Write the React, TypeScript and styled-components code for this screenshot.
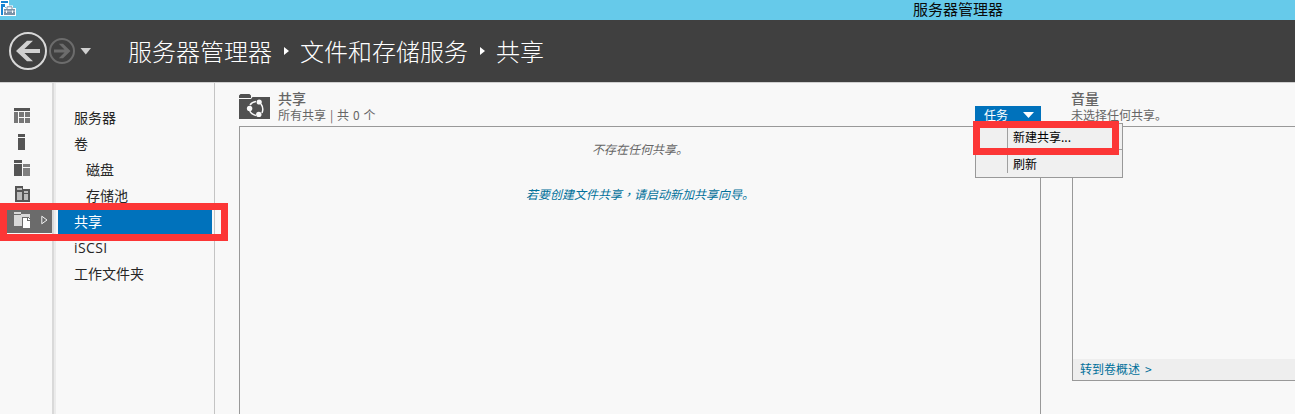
import React from "react";
import styled, { createGlobalStyle, css } from "styled-components";

const GlobalStyle = createGlobalStyle`
  *, *::before, *::after { box-sizing: border-box; }
  html, body { margin: 0; padding: 0; overflow: hidden; }
  body {
    background: #f8f8f8;
    color: #262626;
    font-family: "Noto Sans CJK SC", "Open Sans", sans-serif;
    font-size: 12px;
  }
`;

const Window = styled.div`
  position: relative;
  display: flex;
  flex-direction: column;
  width: 100%;
  height: 414px;
  overflow: hidden;
  white-space: nowrap;
`;

const TitleBar = styled.header`
  display: flex;
  flex: none;
  height: 20px;
  background: #66caea;
`;

const TitleText = styled.span`
  margin-left: 896px;
  font-size: 15px;
  line-height: 17px;
  color: #0a0a0a;
`;

const Banner = styled.div`
  display: flex;
  flex: none;
  align-items: center;
  height: 63px;
  background: #404040;
  border-bottom: 1px solid #d0d0d0;
`;

const HistoryButtons = styled.svg`
  flex: none;
  width: 128px;
  height: 62px;
`;

const Crumbs = styled.nav`
  display: flex;
  align-items: center;
  font-size: 24px;
  font-weight: 300;
  line-height: 62px;
  color: #fff;
`;

const Crumb = styled.span`
  padding-bottom: 1px;
`;

const CrumbArrow = styled.svg`
  width: 5px;
  height: 8px;
  margin: 0 11px 0 12px;
  fill: #fff;
`;

const Body = styled.div`
  display: flex;
  flex: 1;
  min-height: 0;
`;

const Rail = styled.div`
  display: flex;
  flex: none;
  flex-direction: column;
  width: 56px;
  padding-top: 20px;
  border-right: 2px solid #ebebeb;
  box-shadow: inset -2px 0 #d9d9d9;
`;

const RailItem = styled.div<{ $active?: boolean }>`
  display: flex;
  align-items: center;
  width: 45px;
  height: 26px;
  margin-left: 7px;
  padding-left: 7px;
  ${(p) => p.$active && css`
    background: #6b6b6b;
  `}
`;

const RailIcon = styled.svg`
  width: 16px;
  height: 16px;
  shape-rendering: crispEdges;
`;

const RailArrow = styled.svg`
  width: 7px;
  height: 10px;
  margin-left: 11px;
  fill: none;
  stroke: #f2f2f2;
`;

const Nav = styled.nav`
  flex: none;
  width: 159px;
  padding: 22px 2px 0;
  border-right: 1px solid #c4c4c4;
`;

const NavItem = styled.div<{ $active?: boolean; $nested?: boolean }>`
  height: 26px;
  padding-left: ${(p) => (p.$nested ? 28 : 16)}px;
  font-size: 14px;
  line-height: 25px;
  ${(p) => p.$active && css`
    color: #fff;
    background: #0072bc;
  `}
`;

const Latin = styled.span`
  font-family: "Open Sans", sans-serif;
  letter-spacing: 0.4px;
`;

const Shares = styled.section`
  display: flex;
  flex: none;
  flex-direction: column;
  width: 802px;
  margin-left: 24px;
`;

const SectionHead = styled.div`
  display: flex;
  flex: none;
  height: 43px;
`;

const FolderIcon = styled.svg`
  width: 31px;
  height: 26px;
  margin: 11px 8px 0 0;
`;

const HeadText = styled.div`
  flex: 1;
  padding-top: 7px;
  color: #666;
`;

const Heading = styled.h2`
  margin: 0;
  font-size: 14px;
  font-weight: 500;
  line-height: 17px;
`;

const Subheading = styled.p`
  margin: 0;
  font-size: 12px;
  line-height: 15px;
  word-spacing: 1.2px;
`;

const TaskArea = styled.div`
  position: relative;
  align-self: flex-end;
`;

const TaskButton = styled.div`
  display: flex;
  align-items: center;
  justify-content: space-between;
  width: 66px;
  height: 20px;
  padding: 0 7px 3px 9px;
  color: #fff;
  background: #0072bc;
`;

const Caret = styled.svg`
  width: 11px;
  height: 6px;
  fill: #fff;
`;

const Menu = styled.div`
  position: absolute;
  z-index: 2;
  top: 17px;
  left: 0;
  width: 148px;
  height: 55px;
  padding-top: 4px;
  color: #000;
  background: #f0f0f0;
  border: 1px solid #999;
`;

const MenuItem = styled.div`
  height: 22px;
  margin-left: 31px;
  padding-left: 5px;
  line-height: 18px;
  border-left: 1px solid #a0a0a0;
  & + & {
    height: 23px;
    padding-top: 5px;
    box-shadow: 0 -1px #a0a0a0;
  }
`;

const SharesPanel = styled.div`
  display: flex;
  flex: 1;
  flex-direction: column;
  align-items: center;
  border: 1px solid #999;
  border-bottom: 0;
  font-style: italic;
`;

const EmptyText = styled.p`
  margin: 12px 0 0;
  line-height: 20px;
  color: #666;
`;

const WizardLink = styled.a`
  margin-top: 25px;
  line-height: 20px;
  color: #00709a;
`;

const Comma = styled.span`
  font-family: "Noto Sans CJK TC", sans-serif;
`;

const Volume = styled.section`
  flex: 1;
  margin-left: 31px;
`;

const VolumeHead = styled(HeadText)`
  height: 43px;
  margin-left: -1px;
`;

const VolumePanel = styled.div`
  display: flex;
  flex-direction: column;
  justify-content: flex-end;
  height: 255px;
  border: 1px solid #999;
  border-right: 0;
`;

const VolumeFooter = styled.div`
  height: 21px;
  padding-left: 7px;
  line-height: 20px;
  color: #00709a;
  background: #eee;
`;

const More = styled.span`
  padding-left: 5px;
`;

const Highlight = styled.div<{ $menu?: boolean }>`
  position: absolute;
  z-index: 3;
  top: ${(p) => (p.$menu ? 121 : 203)}px;
  left: ${(p) => (p.$menu ? 973 : 0)}px;
  width: ${(p) => (p.$menu ? 146 : 228)}px;
  height: ${(p) => (p.$menu ? 34 : 38)}px;
  border: 7px solid #fc3636;
`;

const AppLogo = () => (
  <svg width="17" height="17" viewBox="0 0 17 17">
    <path d="M0 0h9v7H5v9H0z" fill="#fff" />
    <path d="M1 1h7v2H1zM1 4h4v3H3v8H1z" fill="#1684d2" />
    <path d="M3 8h3V5.5h7V8h3v8H3z" fill="#fff" />
    <path d="M4 9h11v6H4z" fill="#7b92a8" />
    <path d="M7 9V6.8h5V9" fill="none" stroke="#7b92a8" />
    <path d="M4 11.2h11" stroke="#dfe6ec" strokeWidth="0.7" />
    <path d="M6.5 10.5V13m6-2.5V13" stroke="#fff" />
  </svg>
);

export default function App() {
  return (
    <Window>
      <GlobalStyle />
      <TitleBar>
        <AppLogo />
        <TitleText>服务器管理器</TitleText>
      </TitleBar>

      <Banner>
        <HistoryButtons viewBox="0 0 128 62">
          <circle cx="28" cy="31" r="18" fill="none" stroke="#d8d8d8" strokeWidth="2" />
          <path d="M16 31 27 20.7h6L24.4 29H40v4H24.4l8.6 8.3h-6z" fill="#d0d0d0" />
          <circle cx="62" cy="31" r="12" fill="none" stroke="#6c6c6c" strokeWidth="2" />
          <path d="M70.5 31 63 23.8h-4.2l5.7 5.6H54v3.2h10.5l-5.7 5.6H63z" fill="#6c6c6c" />
          <path d="M80.5 28h10.5l-5.2 6.5z" fill="#d0d0d0" />
        </HistoryButtons>
        <Crumbs>
          <Crumb>服务器管理器</Crumb>
          <CrumbArrow viewBox="0 0 5 8"><path d="M0 0l5 4-5 4z" /></CrumbArrow>
          <Crumb>文件和存储服务</Crumb>
          <CrumbArrow viewBox="0 0 5 8"><path d="M0 0l5 4-5 4z" /></CrumbArrow>
          <Crumb>共享</Crumb>
        </Crumbs>
      </Banner>

      <Body>
        <Rail>
          <RailItem>
            <RailIcon viewBox="0 0 16 16">
              <path d="M0 0h16v3H0z" fill="#555" />
              <path d="M0 4h4v11H0zM5 4h5v5H5zM11 4h5v5h-5zM5 10h5v5H5zM11 10h5v5h-5z" fill="#777" />
            </RailIcon>
          </RailItem>
          <RailItem>
            <RailIcon viewBox="0 0 16 16">
              <path d="M4 0h7v3H4zM4 4h7v12H4z" fill="#555" />
            </RailIcon>
          </RailItem>
          <RailItem>
            <RailIcon viewBox="0 0 16 16">
              <path d="M0 0h8v3H0zM0 4h8v12H0z" fill="#555" />
              <path d="M9 4h7v3H9zM9 8h7v8H9z" fill="#808080" />
            </RailIcon>
          </RailItem>
          <RailItem>
            <RailIcon viewBox="0 0 16 16">
              <path d="M1 0h8v3h7v13H1z" fill="#555" />
              <path d="M3 2h5v2H3zM3 6h5v8H3zM10 5h4v2h-4zM10 8h4v6h-4z" fill="#bbb" />
            </RailIcon>
          </RailItem>
          <RailItem $active>
            <RailIcon viewBox="0 0 16 16">
              <path d="M0 0h7v2H0zM0 3h7V2h9v12H0z" fill="#d8d8d8" />
              <path d="M8 5h6l3 3v8H8z" fill="#6b6b6b" />
              <path d="M9 6h4v3h3v7H9zM14 6v2h2z" fill="#fff" />
            </RailIcon>
            <RailArrow viewBox="0 0 7 10"><path d="M.8 1.2v7.6L6 5z" /></RailArrow>
          </RailItem>
        </Rail>

        <Nav>
          <NavItem>服务器</NavItem>
          <NavItem>卷</NavItem>
          <NavItem $nested>磁盘</NavItem>
          <NavItem $nested>存储池</NavItem>
          <NavItem $active>共享</NavItem>
          <NavItem><Latin>iSCSI</Latin></NavItem>
          <NavItem>工作文件夹</NavItem>
        </Nav>

        <Shares>
          <SectionHead>
            <FolderIcon viewBox="0 0 31 26">
              <path d="M0 1.5 1.5 0h9L12 1.5V4H0zM0 5h12l1.5-2H31v22H0z" fill="#505050" />
              <path
                d="M11 11Q13 8 17 7.5M22 10Q25 14 23 19M17 21.5Q12 20 10.8 17"
                fill="none"
                stroke="#f8f8f8"
                strokeWidth="1.5"
              />
              <g fill="#f8f8f8">
                <circle cx="20.2" cy="8" r="2.6" />
                <circle cx="10.6" cy="14.4" r="2.7" />
                <circle cx="19.8" cy="20.4" r="2.7" />
              </g>
            </FolderIcon>
            <HeadText>
              <Heading>共享</Heading>
              <Subheading>所有共享 | 共 0 个</Subheading>
            </HeadText>
            <TaskArea>
              <TaskButton>
                任务
                <Caret viewBox="0 0 11 6"><path d="M0 0h11L5.5 6z" /></Caret>
              </TaskButton>
              <Menu>
                <MenuItem>新建共享...</MenuItem>
                <MenuItem>刷新</MenuItem>
              </Menu>
            </TaskArea>
          </SectionHead>
          <SharesPanel>
            <EmptyText>不存在任何共享。</EmptyText>
            <WizardLink>若要创建文件共享<Comma lang="zh-TW">，</Comma>请启动新加共享向导。</WizardLink>
          </SharesPanel>
        </Shares>

        <Volume>
          <VolumeHead>
            <Heading>音量</Heading>
            <Subheading>未选择任何共享。</Subheading>
          </VolumeHead>
          <VolumePanel>
            <VolumeFooter>转到卷概述<More>&gt;</More></VolumeFooter>
          </VolumePanel>
        </Volume>
      </Body>

      <Highlight />
      <Highlight $menu />
    </Window>
  );
}
